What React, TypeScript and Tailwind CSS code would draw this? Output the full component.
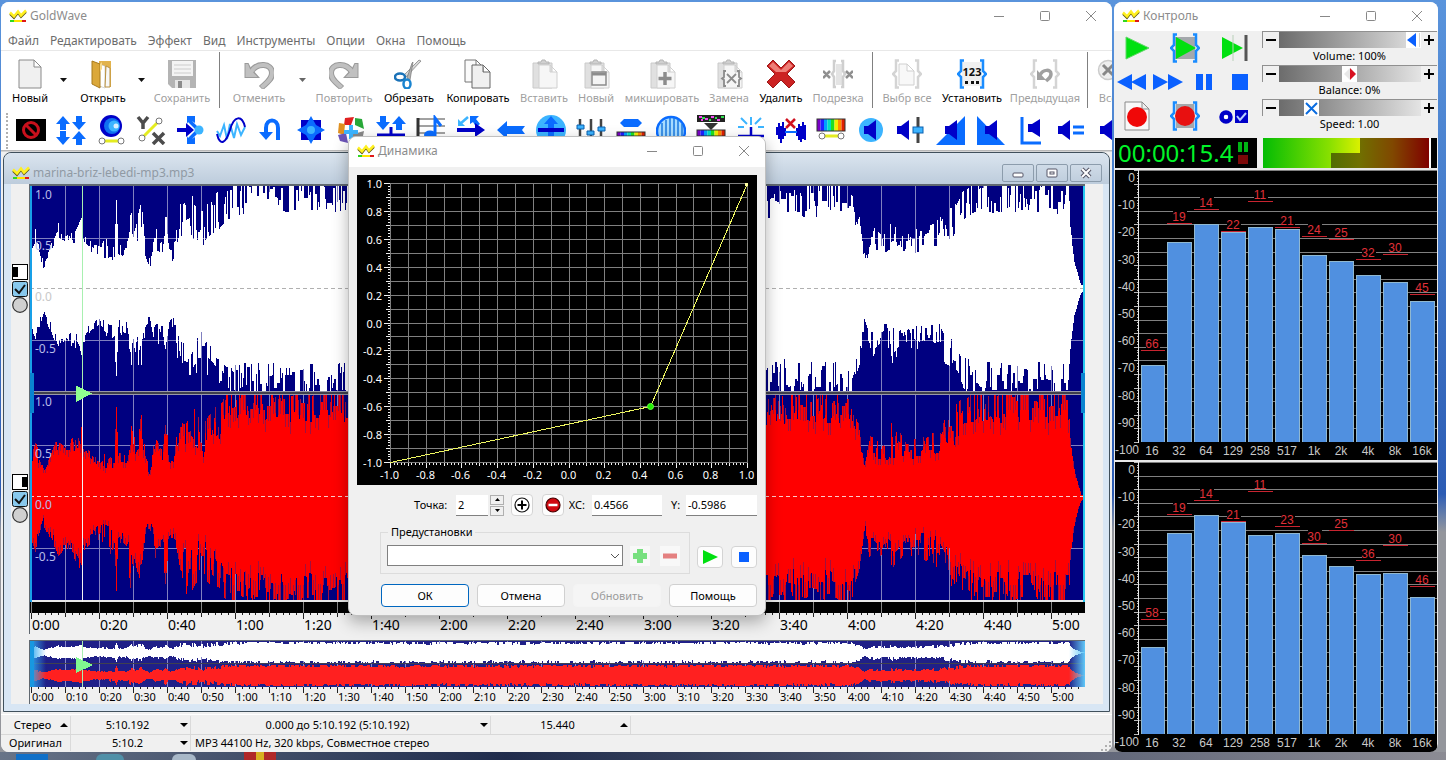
import {type ReactNode} from "react";
import clsx from "clsx";

const RAINBOW = ["#7a00c8", "#2020ff", "#00a0ff", "#00e0c0", "#20e020", "#f0f000", "#ff9000", "#e02000"];

// ---------------------------------------------------------------- waveform data

const WIDTH = 1055;
const PX_PER_SECOND = 3.4;
const timeX = (seconds: number) => Math.round(1 + seconds * PX_PER_SECOND);

const random = (seed: number) => {
    let s = seed;
    return () => {
        s = (s * 1664525 + 1013904223) % 4294967296;
        return s / 4294967296;
    };
};

// x, quiet level, loud level
const ENVELOPE = [
    [0, .32, .4], [5, .38, .58], [9, .3, .42], [13, .18, .28], [19, .28, .4], [28, .46, .64], [34, .45, .52],
    [44, .4, .6], [51, .5, .74], [54, .42, .55], [60, .33, .48], [70, .22, .42], [80, .24, .6], [84, .25, .55],
    [86, .8, .92], [88, .3, .45], [96, .3, .5], [100, .5, .88], [104, .4, .6], [111, .5, .88], [115, .3, .4],
    [119, .18, .3], [125, .35, .6], [132, .32, .5], [135, .5, .85], [139, .3, .4], [143, .25, .4], [150, .45, .9],
    [160, .5, .95], [168, .4, .8], [175, .38, .85], [185, .5, .95], [195, .65, 1.05], [215, .72, 1.1],
    [330, .72, 1.12], [420, .68, 1.1], [700, .72, 1.1], [740, .68, 1.05], [790, .68, 1.08], [820, .72, 1.05],
    [829, .52, .75], [834, .25, .35], [840, .32, .7], [855, .32, .55], [862, .34, .75], [875, .36, .55],
    [890, .32, .62], [908, .32, .7], [915, .45, .85], [925, .5, .9], [932, .65, 1.0], [950, .7, 1.1],
    [1038, .72, 1.12], [1040, .55, .6], [1044, .25, .28], [1048, .1, .12], [1051, .02, .04], [1056, 0, 0],
];

const makePeaks = (seed: number) => {
    const rnd = random(seed);
    const peaks: number[] = [];
    let k = 0;
    let held = rnd();
    for (let x = 0; x < WIDTH; x++) {
        while (ENVELOPE[k + 1][0] <= x && k < ENVELOPE.length - 2) k++;
        const [x0, lo0, hi0] = ENVELOPE[k];
        const [x1, lo1, hi1] = ENVELOPE[k + 1];
        const t = (x - x0) / (x1 - x0);
        if (rnd() > .35) held = rnd();
        const lo = lo0 + (lo1 - lo0) * t;
        const hi = hi0 + (hi1 - hi0) * t;
        peaks.push(Math.min(1, lo + (hi - lo) * held));
    }
    return peaks;
};

const LEFT_UP = makePeaks(7);
const LEFT_DOWN = makePeaks(19);
const RIGHT_UP = makePeaks(31);
const RIGHT_DOWN = makePeaks(53);

// one closed, stepped outline: upper peaks left to right, lower peaks back
const wavePath = (up: number[], down: number[], center: number, half: number, scale = 1) => {
    const top = up.map((u, x) => `V${Math.round(center - u * half * scale)}H${x + 1}`).join("");
    const bottom = down
        .map((d, x) => `V${Math.round(center + d * half * scale) + 1}H${x}`)
        .reverse()
        .join("");
    return `M0 ${center}${top}${bottom}Z`;
};

// every few columns keeps only a thinner body, the rest of its peak is drawn dimmed
const thin = (peaks: number[]) => peaks.map((p, x) => (x * 7) % 5 < 2 ? p * .84 : p);

const range = (count: number) => Array.from({length: count}, (_, i) => i);

const clock = (seconds: number) => `${Math.floor(seconds / 60)}:${String(seconds % 60).padStart(2, "0")}`;

// ---------------------------------------------------------------- shared pieces

const Logo = () => (
    <svg className="h-[14px] w-[18px] shrink-0" viewBox="0 0 18 14">
        <path d="M1 5L5 9L9 4L12 8L17 3" fill="none" stroke="#5c5410" strokeWidth="2"/>
        <path d="M1 3.500L5 7.500L9 2.500L12 6.500L17 1.500" fill="none" stroke="#fff020" strokeWidth="2.500"/>
        <rect x="1" y="11" width="4" height="2" fill="#30d820"/>
        <rect x="5" y="11" width="8" height="2" fill="#ffe400"/>
        <rect x="13" y="11" width="4" height="2" fill="#e01818"/>
    </svg>
);

const TitleBar = ({title}: { title: string }) => (
    <header className="flex h-[30px] shrink-0 items-center bg-white pb-0.5 pl-2">
        <Logo/>
        <h1 className="ml-[3px] flex-1 text-xs text-[#8c8c8c]">{title}</h1>
        <div className="-mr-0.5 flex h-full">
            <button aria-label="Свернуть" className="flex h-full w-[46px] items-center justify-center">
                <svg className="size-3" viewBox="0 0 12 12"><path d="M1 6.500H11" stroke="#888"/></svg>
            </button>
            <button aria-label="Развернуть" className="flex h-full w-[46px] items-center justify-center">
                <svg className="size-3" viewBox="0 0 12 12">
                    <rect x="1.500" y="1.500" width="9" height="9" rx="1" fill="none" stroke="#888"/>
                </svg>
            </button>
            <button aria-label="Закрыть" className="flex h-full w-[46px] items-center justify-center">
                <svg className="size-3" viewBox="0 0 12 12"><path d="M1 1L11 11M11 1L1 11" stroke="#888"/></svg>
            </button>
        </div>
    </header>
);

// ---------------------------------------------------------------- main toolbar

const Sheet = ({x = 5, y = 1, w = 21, h = 28, fill = "#f0f0f0", stroke = "#8a8a8a"}) => (
    <path
        d={`M${x} ${y}H${x + w - 7}L${x + w} ${y + 7}V${y + h}H${x}ZM${x + w - 7} ${y}V${y + 7}H${x + w}`}
        fill={fill}
        stroke={stroke}
    />
);

const Clipboard = () => (
    <>
        <path d="M4 4H23V29H4Z" fill="#e0e0e0" stroke="#cacaca"/>
        <path d="M9 5H20V3H17L16 1H13L12 3H9Z" fill="#d0d0d0" stroke="#b4b4b4"/>
        <Sheet x={10} y={6} w={18} h={23} fill="#f6f6f6" stroke="#d0d0d0"/>
    </>
);

const Braces = ({color, x1 = 0, x2 = 30}: { color: string; x1?: number; x2?: number }) => (
    <path
        d={`M${x1 + 7} 1.500H${x1 + 4}V12L${x1 + 1} 15L${x1 + 4} 18V28.500H${x1 + 7}M${x2 - 7} 1.500H${x2 - 4}V12L${x2 - 1} 15L${x2 - 4} 18V28.500H${x2 - 7}`}
        fill="none"
        stroke={color}
        strokeWidth="2.500"
    />
);

const UndoArrow = () => (
    <>
        <path d="M7 13C13 3 28 4 28 14C28 21 22 24 17 29" fill="none" stroke="#9a9a9a" strokeWidth="6"/>
        <path d="M.5 4H4.500L7 9L16 19H.5Z" fill="#9a9a9a"/>
        <path d="M7 13C13 3 28 4 28 14C28 21 22 24 17.500 28.500" fill="none" stroke="#c0c0c0" strokeWidth="4"/>
        <path d="M1.500 5H4L6 10L13.500 18H1.500Z" fill="#c0c0c0"/>
    </>
);

const TOOLS: Record<string, ReactNode> = {
    new: <Sheet w={22} x={4}/>,
    open: <>
        <path d="M11 2H23V28H11Z" fill="#e2b34c"/>
        <path d="M11 5L17 7V29L11 27Z" fill="#fff" stroke="#aaa" strokeWidth=".5"/>
        <path d="M18 7L22 9V28H17Z" fill="#f8f8f8" stroke="#b89040"/>
        <path d="M4 2L12 5V29L4 25Z" fill="#dba83a" stroke="#a87a1c"/>
        <path d="M12 5L14 3V10L12 13" fill="#f6d98c"/>
    </>,
    save: <>
        <path d="M1 1H29V29H5L1 25Z" fill="#b4b4b4"/>
        <path d="M5 2H26V17H5Z" fill="#f4f4f4"/>
        <path d="M7 6H24M7 10H24M7 14H24" stroke="#ccc"/>
        <path d="M8 21H23V29H8Z" fill="#e6e6e6"/>
        <path d="M11 22H15V29H11Z" fill="#8c8c8c"/>
    </>,
    undo: <UndoArrow/>,
    redo: <g transform="matrix(-1 0 0 1 30 0)"><UndoArrow/></g>,
    cut: <>
        <path d="M27 2L12 18L10 16L25 1Z" fill="#d8d8d8" stroke="#777" strokeWidth=".7"/>
        <path d="M19 3L16 21L13 19L18 4Z" fill="#b0b0b0" stroke="#777" strokeWidth=".7"/>
        <ellipse cx="6" cy="18" rx="5" ry="3.500" fill="none" stroke="#1a72b8" strokeWidth="2.500"/>
        <ellipse cx="13" cy="25" rx="3.500" ry="4.500" fill="none" stroke="#1a84d0" strokeWidth="2.500"/>
    </>,
    copy: <>
        <Sheet x={2} y={1} w={18} h={22} fill="#fafafa" stroke="#777"/>
        <Sheet x={9} y={6} w={18} h={23} fill="#f0f0f0" stroke="#666"/>
    </>,
    paste: <Clipboard/>,
    pasteNew: <>
        <Clipboard/>
        <rect x="11" y="13" width="14" height="13" fill="#f4f4f4" stroke="#8c8c8c" strokeWidth="1.500"/>
        <path d="M11 15H25" stroke="#8c8c8c" strokeWidth="3"/>
    </>,
    mix: <><Clipboard/><path d="M18 13V26M11.500 19.500H24.500" stroke="#8c8c8c" strokeWidth="3.500"/></>,
    replace: <>
        <Clipboard/>
        <path d="M12 12H10V18L8 19.500L10 21V27H12M23 12H25V18L27 19.500L25 21V27H23M13 15L22 24M22 15L13 24"
              fill="none" stroke="#8c8c8c" strokeWidth="1.800"/>
    </>,
    remove: <>
        <path d="M1 7L7 1L15 9L23 1L29 7L21 15L29 23L23 29L15 21L7 29L1 23L9 15Z" fill="#cc2222" stroke="#9c1818"
              strokeLinejoin="round"/>
        <path d="M3 7L7 3L15 11L23 3L27 7L20 13L10 13Z" fill="#ee7f78"/>
    </>,
    trim: <>
        <rect x="13" y="5" width="6" height="21" fill="#e4e4e4"/>
        <path d="M13 2H11V12L9 15L11 18V28H13M18 2H20V12L22 15L20 18V28H18" fill="none" stroke="#cfcfcf"
              strokeWidth="2.500"/>
        <path d="M0 12L7 19M7 12L0 19M23 12L30 19M30 12L23 19" stroke="#909090" strokeWidth="2.500"/>
    </>,
    selectAll: <><Braces color="#d4d4d4"/><Sheet x={7} y={5} w={15} h={21} fill="#f8f8f8" stroke="#d0d0d0"/></>,
    set: <>
        <rect x="5" y="3" width="20" height="24" fill="#f0f0f0"/>
        <Braces color="#1a8cff"/>
        <text x="15" y="17" textAnchor="middle" fontSize="11" fontWeight="700" fill="#111">123</text>
        <path d="M8 22H11V25H8ZM14 22H17V25H14ZM19 22H22V25H19Z" fill="#111"/>
    </>,
    previous: <>
        <Braces color="#d4d4d4"/>
        <path d="M10 16C13 10 21 10 21 15C21 19 18 20 16 22" fill="none" stroke="#a0a0a0" strokeWidth="3.500"/>
        <path d="M7 11V21H16Z" fill="#a0a0a0"/>
    </>,
    all: <>
        <circle cx="15" cy="11" r="9.500" fill="#eee" stroke="#ccc" strokeWidth="1.500"/>
        <path d="M10 6L20 16M20 6L10 16" stroke="#888" strokeWidth="3"/>
    </>,
};

type Tool = { icon: string; label: string; width: string; on?: boolean; menu?: string };

const GROUPS: Tool[][] = [
    [
        {icon: "new", label: "Новый", width: "w-12", on: true, menu: "w-[18px]"},
        {icon: "open", label: "Открыть", width: "w-[62px]", on: true, menu: "w-[14px]"},
        {icon: "save", label: "Сохранить", width: "w-[68px]"},
    ],
    [
        {icon: "undo", label: "Отменить", width: "w-[72px]", menu: "w-[14px]"},
        {icon: "redo", label: "Повторить", width: "w-[70px]"},
        {icon: "cut", label: "Обрезать", width: "w-[60px]", on: true},
        {icon: "copy", label: "Копировать", width: "w-[78px]", on: true},
        {icon: "paste", label: "Вставить", width: "w-[54px]"},
        {icon: "pasteNew", label: "Новый", width: "w-[50px]"},
        {icon: "mix", label: "микшировать", width: "w-[82px]"},
        {icon: "replace", label: "Замена", width: "w-[52px]"},
        {icon: "remove", label: "Удалить", width: "w-[52px]", on: true},
        {icon: "trim", label: "Подрезка", width: "w-[62px]"},
    ],
    [
        {icon: "selectAll", label: "Выбр все", width: "w-[62px]"},
        {icon: "set", label: "Установить", width: "w-[68px]", on: true},
        {icon: "previous", label: "Предыдущая", width: "w-[78px]"},
    ],
    [
        {icon: "all", label: "Все", width: "w-[34px]"},
    ],
];

const MainToolbar = () => (
    <div className="flex h-[59px] shrink-0 overflow-hidden border-t border-[#e8e8e8] pl-[5px]">
        {GROUPS.map((group, g) => (
            <div key={g} className="flex shrink-0">
                {g > 0 && <div className="mx-[3px] my-px w-px bg-[#808080]"/>}
                {group.map((tool) => (
                    <div key={tool.label} className="flex shrink-0">
                        <button
                            className={clsx("flex flex-col items-center justify-center whitespace-nowrap pt-1 text-[11px] leading-4", tool.width, tool.on ? "text-black" : "text-[#a0a0a0]")}
                        >
                            <svg className="mb-px size-[30px] shrink-0" viewBox="0 0 30 30">{TOOLS[tool.icon]}</svg>
                            {tool.label}
                        </button>
                        {tool.menu && (
                            <button aria-label={`${tool.label}: список`}
                                    className={clsx("flex items-center justify-center", tool.menu)}>
                                <svg className="h-1 w-[7px]" viewBox="0 0 7 4">
                                    <path d="M0 0H7L3.500 4Z" fill={tool.on ? "#111" : "#666"}/>
                                </svg>
                            </button>
                        )}
                    </div>
                ))}
            </div>
        ))}
    </div>
);

// ---------------------------------------------------------------- effects toolbar

const BLUE = "#0a6cff";
const NAVY = "#0000c8";
const SKY = "#3cb4ff";

const ArrowUp = ({x, y, flip = false}: { x: number; y: number; flip?: boolean }) => (
    <path transform={`translate(${x} ${y}) scale(1 ${flip ? -1 : 1})`} d="M0-7L7 1H3V7H-3V1H-7Z" fill={BLUE}/>
);

const Speaker = ({x, y = 15, h = 10}: { x: number; y?: number; h?: number }) => (
    <path d={`M${x} ${y - 4}H${x + 4}L${x + 12} ${y - h}V${y + h}L${x + 4} ${y + 4}H${x}Z`} fill={NAVY}/>
);

const Rainbow = ({y, h}: { y: number; h: number }) => (
    <>
        {RAINBOW.map((color, i) => <rect key={color} x={1 + i * 3.5} y={y} width="3.5" height={h} fill={color}/>)}
        <rect x="1" y={y} width="28" height={h} fill="none" stroke="#333"/>
    </>
);

const NodeLine = ({x1, y1, x2, y2}: { x1: number; y1: number; x2: number; y2: number }) => (
    <>
        <path d={`M${x1} ${y1}L${x2} ${y2}`} stroke="#e4ec20" strokeWidth="3"/>
        <circle cx={x1} cy={y1} r="3" fill="#fff" stroke="#777"/>
        <circle cx={x2} cy={y2} r="3" fill="#fff" stroke="#777"/>
    </>
);

const EFFECTS: [string, ReactNode][] = [
    ["Цензура", <>
        <rect y="4" width="30" height="22" fill="#000"/>
        <circle cx="15" cy="15" r="7.500" fill="none" stroke="#c8101c" strokeWidth="3"/>
        <path d="M10 10L20 20" stroke="#c8101c" strokeWidth="3"/>
    </>],
    ["Компрессор", <>
        <ArrowUp x={7} y={8}/><ArrowUp x={23} y={8} flip/>
        <ArrowUp x={7} y={23} flip/><ArrowUp x={23} y={23}/>
    </>],
    ["Доплер", <>
        <circle cx="15" cy="11" r="11" fill={NAVY}/>
        <circle cx="16" cy="11" r="8" fill="#1070f0"/>
        <circle cx="18" cy="11" r="5.500" fill={SKY}/>
        <circle cx="20" cy="11" r="2.500" fill="#d8f0ff"/>
        <NodeLine x1={6} y1={26} x2={25} y2={26}/>
    </>],
    ["Динамика", <>
        <NodeLine x1={6} y1={23} x2={23} y2={6}/>
        <path d="M2 2L7 8L12 2M7 7V14M17 18L28 29M28 18L17 29" fill="none" stroke="#4c4c4c" strokeWidth="3.500"/>
    </>],
    ["Эхо", <>
        <path d="M11 1H19V8L16 6L23 13L20 15L12 7L11 9ZM11 29H19V22L16 24L23 17L20 15L12 23L11 21Z" fill={BLUE}/>
        <path d="M1 13H10V8L18 15L10 22V17H1Z" fill={NAVY}/>
        <circle cx="23" cy="15" r="4.500" fill={SKY}/>
    </>],
    ["Фильтр", <>
        <path d="M1 16L4 21L8 10L11 24L14 9L18 23L21 9L25 20L29 12" fill="none" stroke={SKY} strokeWidth="2"/>
        <path d="M1 19C4 32 10 28 14 15C18 0 26 0 29 12" fill="none" stroke={NAVY} strokeWidth="2"/>
    </>],
    ["Реверс", <>
        <path d="M22 25V13C22 3 10 3 10 13V18" fill="none" stroke={BLUE} strokeWidth="4"/>
        <path d="M3 17H17L10 25Z" fill={BLUE}/>
    </>],
    ["Интерполяция", <>
        <rect x="5" y="5" width="20" height="20" fill={NAVY}/>
        <path d="M15 1L20 10L29 15L20 20L15 29L10 20L1 15L10 10Z" fill={BLUE}/>
        <circle cx="15" cy="15" r="4" fill={SKY}/>
    </>],
    ["Плагины", <>
        <path d="M9 3L18 2L15 10L8 10Z" fill="#e02020"/>
        <path d="M19 3L26 4L28 14L19 10Z" fill="#28a838"/>
        <path d="M3 8L9 9L8 20L2 18Z" fill="#e09020"/>
        <path d="M2 20L10 18L12 28L4 26Z" fill="#6c54b8"/>
        <path d="M14 20L28 16L26 26L16 28Z" fill="#888"/>
        <path d="M15 10V24M8 17H22" stroke={SKY} strokeWidth="4"/>
    </>],
    ["Инверсия", <>
        <ArrowUp x={7} y={8} flip/><ArrowUp x={23} y={8}/>
        <path d="M1 20H29M15 12V28" stroke={NAVY} strokeWidth="3"/>
    </>],
    ["Высота тона", <>
        <path d="M2 4H29M2 11H29M2 18H29M2 25H29" stroke="#444"/>
        <path d="M2 3V26" stroke="#333" strokeWidth="3"/>
        <path d="M19 21V3L25 11" fill="none" stroke={BLUE} strokeWidth="3"/>
        <ellipse cx="14" cy="20" rx="6" ry="4.500" fill={BLUE}/>
    </>],
    ["Смещение", <>
        <path d="M14 1H23L20 4L24 9L20 12L17 7L14 9Z" fill={BLUE}/>
        <path d="M12 2L4 9" stroke={SKY} strokeWidth="2.500"/>
        <path d="M2 4V11H9Z" fill={SKY}/>
        <path d="M1 13H19V8L29 15L19 22V17H1Z" fill={NAVY}/>
    </>],
    ["Назад", <path d="M1 15L11 6V11H29L26 15L29 19H11V24Z" fill={BLUE}/>],
    ["Автоусиление", <>
        <circle cx="15" cy="15" r="15" fill={SKY}/>
        <path d="M15 1L22 9H18V13H12V9H8Z" fill={BLUE}/>
        <rect x="2" y="13" width="26" height="4" fill={NAVY}/>
        <path d="M12 17H18V27H12Z" fill={BLUE}/>
    </>],
    ["Эквалайзер", <>
        <path d="M4 4V26M15 4V26M25 4V26" stroke="#444" strokeWidth="2.500"/>
        <path d="M1 10H8V14H1ZM11 16H18V20H11ZM22 12H29V16H22Z" fill={SKY} stroke="#0a60b0"/>
    </>],
    ["Спектр", <>
        <path d="M4 8L8 4H22L26 8L22 12H8Z" fill={BLUE}/>
        <Rainbow y={17} h={4}/>
    </>],
    ["Сглаживание", <>
        <circle cx="15" cy="16" r="14" fill="#a8dcff" stroke={BLUE} strokeWidth="2.500"/>
        <path d="M6 8V25M10 5V27M14 3V29M18 3V29M22 5V27M26 9V25" stroke="#1a7ae0" strokeWidth="1.500"/>
    </>],
    ["Шумоподавление", <>
        <rect x="1" y="0" width="28" height="7" fill="#222"/>
        <path d="M3 2H6M9 4H12M15 2H18M21 5H24M5 5H7" stroke="#f04cf0" strokeWidth="2"/>
        <path d="M6 3H9M13 5H15M19 3H21M25 2H28" stroke="#30e050" strokeWidth="2"/>
        <path d="M8 8H22L15 15Z" fill="#333"/>
        <Rainbow y={15} h={6}/>
    </>],
    ["Щелчки", <>
        <path d="M5 3L11 9M25 3L19 9M2 12H8M22 12H28M15 2V10" stroke={SKY} strokeWidth="2"/>
        <path d="M15 12V22M2 21H28" stroke={NAVY} strokeWidth="2.500"/>
    </>],
    ["Тишина", <>
        <path d="M1 12V20M3 8V24M5 11V28M7 7V24M9 13V21M21 13V21M23 9V25M25 11V27M27 7V24M29 10V25" stroke={NAVY}
              strokeWidth="2"/>
        <path d="M9 17H21" stroke={BLUE} strokeWidth="2"/>
        <path d="M10 4L19 13M19 4L10 13" stroke="#d01020" strokeWidth="2.500"/>
    </>],
    ["Спектральный фильтр", <><Rainbow y={4} h={12}/><NodeLine x1={6} y1={21} x2={25} y2={21}/></>],
    ["Громкость", <><circle cx="15" cy="15" r="12" fill={SKY}/><Speaker x={8}/></>],
    ["Изменить громкость", <>
        <Speaker x={1}/>
        <path d="M22 2V28" stroke="#444" strokeWidth="3"/>
        <rect x="17" y="12" width="10" height="6" fill={SKY} stroke="#0a60b0"/>
    </>],
    ["Нарастание", <><path d="M0 30L29 1V30Z" fill={BLUE}/><Speaker x={9}/></>],
    ["Затухание", <><path d="M1 1L29 30H1Z" fill={BLUE}/><Speaker x={9}/></>],
    ["Форма громкости", <><path d="M6 2V28H25" fill="none" stroke={BLUE} strokeWidth="3"/><Speaker x={12} y={13} h={9}/></>],
    ["Выровнять громкость", <><Speaker x={2}/><path d="M17 12H28M17 18H28" stroke={BLUE} strokeWidth="3"/></>],
    ["Максимум", <Speaker x={4}/>],
];

const EffectsToolbar = () => (
    <div className="flex h-[42px] shrink-0 overflow-hidden border-b border-[#b8b8b8] pl-[5px] pt-1">
        <div className="mr-[3px] h-9 w-0.5 shrink-0 border-l-2 border-dotted border-[#b0b0b0]"/>
        {EFFECTS.map(([label, art]) => (
            <button key={label} aria-label={label} className="flex h-[33px] w-10 shrink-0 items-center justify-center">
                <svg className="size-[30px]" viewBox="0 0 30 30">{art}</svg>
            </button>
        ))}
    </div>
);

// ---------------------------------------------------------------- sound window

const AXIS = [
    {y: 9, text: "1.0"}, {y: 60, text: "0.5"}, {y: 111, text: "0.0"}, {y: 163, text: "-0.5"},
    {y: 216, text: "1.0"}, {y: 268, text: "0.5"}, {y: 319, text: "0.0"}, {y: 371, text: "-0.5"},
];

const gridPath = (height: number) => range(32).map((i) => `M${timeX(i * 10) + .5} 0V${height}`).join("");

const Wave = () => (
    <div className="relative min-h-[300px] flex-1 bg-[#000080]">
        <svg className="absolute inset-0 h-full w-full" viewBox="0 0 1055 416" preserveAspectRatio="none"
             shapeRendering="crispEdges">
            <rect width="1055" height="416" fill="#000080"/>
            <path d={`${gridPath(416)}M0 52.500H1055M0 154.500H1055M0 259.500H1055M0 362.500H1055`} stroke="#8080c0"/>
            <path d={wavePath(LEFT_UP, LEFT_DOWN, 102, 102)} fill="#fff"/>
            <path d={wavePath(RIGHT_UP, RIGHT_DOWN, 311, 103)} fill="#a01040"/>
            <path d={wavePath(thin(RIGHT_UP), thin(RIGHT_DOWN), 311, 103)} fill="#f00"/>
            <path d="M0 102.500H1055" stroke="#b0b0b0" strokeDasharray="4 3"/>
            <path d="M0 310.500H1055" stroke="#ffc8c8" strokeDasharray="4 3"/>
            <rect y="205" width="1055" height="3" fill="#40404c"/>
            <path d="M0 205.500H1055M0 208.500H1055" stroke="#9898a8"/>
            <path d="M0 415H1055" stroke="#e8e8e8" strokeWidth="2"/>
            <path d="M52.500 0V206" stroke="#a8f0b0"/>
            <path d="M52.500 206V416" stroke="#f4f4f4"/>
            <path d="M1 0V416" stroke="#18a0e8" strokeWidth="2"/>
            <path d="M1054 0V416" stroke="#28c8f0" strokeWidth="2"/>
            <path d="M0 187H4V227H0ZM1051 187H1055V227H1051Z" fill="#0a84d0"/>
            <path d="M46 199.500L62 207.500L46 216Z" fill="#90ff90"/>
        </svg>
        {AXIS.map(({y, text}, i) => (
            <span
                key={i}
                className={clsx("absolute left-[5px] -translate-y-1/2 text-xs leading-4", i === 2 ? "text-[#c8c8c8]" : "text-[#b8bce8]")}
                style={{top: `${(y / 416) * 100}%`}}
            >
                {text}
            </span>
        ))}
    </div>
);

const Ruler = ({step, className}: { step: number; className: string }) => (
    <div className={clsx("relative overflow-hidden whitespace-nowrap bg-[#f0f0f0] text-black", className)}>
        <svg className="absolute inset-x-0 top-0 h-[6px] w-full" viewBox="0 0 1055 6" preserveAspectRatio="none"
             shapeRendering="crispEdges">
            <path
                d={range(156).map((i) => `M${timeX(i * 2) + .5} 0V${(i * 2) % step === 0 ? 6 : (i * 2) % 10 === 0 ? 4 : 2}`).join("")}
                stroke="#222"
            />
        </svg>
        {range(Math.floor(300 / step) + 1).map((i) => (
            <span key={i} className="absolute bottom-0" style={{left: `${((timeX(i * step) + 1) / WIDTH) * 100}%`}}>
                {clock(i * step)}
            </span>
        ))}
    </div>
);

const Overview = () => (
    <svg className="h-[46px] w-full" viewBox="0 0 1055 46" preserveAspectRatio="none" shapeRendering="crispEdges">
        <defs>
            <linearGradient id="fade"><stop stopColor="#30a8f0"/><stop offset="1" stopColor="#30a8f0" stopOpacity="0"/></linearGradient>
            <linearGradient id="fadeEnd"><stop stopColor="#60c8f8" stopOpacity="0"/><stop offset="1" stopColor="#60c8f8"/></linearGradient>
        </defs>
        <rect width="1055" height="46" fill="#202088"/>
        <path d={gridPath(46)} stroke="#8888c8"/>
        <path d={wavePath(LEFT_UP, LEFT_DOWN, 11, 11, .95)} fill="#fff"/>
        <path d={wavePath(RIGHT_UP, RIGHT_DOWN, 34, 11, .95)} fill="#ff2020"/>
        <path d="M0 22.500H1055" stroke="#404050"/>
        <rect width="16" height="46" fill="url(#fade)"/>
        <rect width="4" height="46" fill="#1898e0"/>
        <rect x="1039" width="16" height="46" fill="url(#fadeEnd)"/>
        <path d="M52.500 0V46" stroke="#a8f0b0"/>
        <path d="M46 16L63 24L46 32Z" fill="#80f890"/>
    </svg>
);

const ChannelControls = ({name, side}: { name: string; side: "left" | "right" }) => (
    <div className="flex flex-col items-center">
        <svg className="size-4" viewBox="0 0 16 16">
            <rect x=".5" y=".5" width="15" height="15" fill="#fff" stroke="#000"/>
            <rect x={side === "left" ? 1 : 10} y="3" width="5" height="10" fill="#000"/>
        </svg>
        <label className="mt-px h-4">
            <input type="checkbox" defaultChecked className="sr-only" aria-label={`${name} канал`}/>
            <svg className="size-4" viewBox="0 0 16 16">
                <rect x=".5" y=".5" width="15" height="15" rx="2" fill="#88c8ec" stroke="#111"/>
                <path d="M3 8L7 12L13 4" fill="none" stroke="#111" strokeWidth="2"/>
            </svg>
        </label>
        <label className="h-4">
            <input type="radio" name="solo" className="sr-only" aria-label={`${name} канал: соло`}/>
            <svg className="size-4" viewBox="0 0 16 16">
                <circle cx="8" cy="8" r="7.300" fill="#d0d0d0" stroke="#333" strokeWidth="1.200"/>
            </svg>
        </label>
    </div>
);

const childButton = "flex h-[18px] w-8 items-center justify-center rounded-xs border border-[#8c9cac]";

const SoundWindow = () => (
    <section className="mx-0.5 flex flex-1 flex-col rounded-t-lg border border-[#40505c] bg-[#d8e6f4] pb-[7px] pl-[7px] pr-[6px]">
        <header
            className="-ml-[7px] -mr-[6px] flex h-[31px] shrink-0 items-center rounded-t-lg bg-linear-to-b from-[#dbe5ef] to-[#bdccdc] pl-2 pr-[7px] pt-2">
            <Logo/>
            <h2 className="ml-[3px] flex-1 text-xs text-[#909aa4]">marina-briz-lebedi-mp3.mp3</h2>
            <div className="flex gap-0.5">
                <button aria-label="Свернуть файл" className={childButton}>
                    <svg className="h-3 w-4" viewBox="0 0 16 12">
                        <rect x="3" y="6" width="10" height="4" rx="1" fill="#fff" stroke="#556"/>
                    </svg>
                </button>
                <button aria-label="Развернуть файл" className={childButton}>
                    <svg className="h-3 w-4" viewBox="0 0 16 12">
                        <rect x="3" y="2" width="10" height="8" rx="1" fill="#fff" stroke="#556"/>
                        <rect x="6" y="5" width="4" height="2" fill="#fff" stroke="#556"/>
                    </svg>
                </button>
                <button aria-label="Закрыть файл" className={childButton}>
                    <svg className="h-3 w-4" viewBox="0 0 16 12">
                        <path d="M4 2L12 10M12 2L4 10" stroke="#556" strokeWidth="4"/>
                        <path d="M4 2L12 10M12 2L4 10" stroke="#fff" strokeWidth="2"/>
                    </svg>
                </button>
            </div>
        </header>
        <div className="flex flex-1 bg-[#f0f0f0]">
            <div className="flex w-[18px] shrink-0 flex-col gap-[161px] pt-20">
                <ChannelControls name="Левый" side="left"/>
                <ChannelControls name="Правый" side="right"/>
            </div>
            <div className="flex min-w-0 flex-1 flex-col">
                <div className="flex flex-1 flex-col border-l border-t-2 border-[#606870]">
                    <Wave/>
                    <svg className="h-[11px] w-full shrink-0 bg-black" viewBox="0 0 1055 11" preserveAspectRatio="none"
                         shapeRendering="crispEdges">
                        <path d={gridPath(11)} stroke="#888"/>
                    </svg>
                    <Ruler step={20} className="h-[21px] text-sm leading-[18px]"/>
                </div>
                <div className="mt-[6px] flex flex-col border-l border-t border-[#606870]">
                    <Overview/>
                    <Ruler step={10} className="h-[17px] text-[11px] leading-[14px]"/>
                </div>
            </div>
            <div className="w-[18px] shrink-0"/>
        </div>
    </section>
);

// ---------------------------------------------------------------- status bar

const StatusCell = ({width, text, arrow}: { width: string; text: string; arrow?: "up" | "down" }) => (
    <div className={clsx("flex shrink-0 items-center border-r border-[#dadada]", width, arrow && "pl-1")}>
        <span className="flex-1 text-center">{text}</span>
        {arrow && (
            <button aria-label={`${text}: список`} className="mr-0.5 flex h-4 w-2 items-center">
                <svg className="h-1 w-2" viewBox="0 0 8 4">
                    <path d={arrow === "up" ? "M0 4H8L4 0Z" : "M0 0H8L4 4Z"} fill="#000"/>
                </svg>
            </button>
        )}
    </div>
);

const StatusBar = () => (
    <footer className="mt-0.5 flex h-[38px] shrink-0 flex-col bg-[#f0f0f0] text-[11px] leading-4 text-black">
        <div className="flex flex-1 border-t border-white pt-px">
            <StatusCell width="w-[70px]" text="Стерео" arrow="up"/>
            <StatusCell width="w-[120px]" text="5:10.192" arrow="down"/>
            <StatusCell width="w-[300px]" text="0.000 до 5:10.192 (5:10.192)" arrow="down"/>
            <StatusCell width="w-[140px]" text="15.440" arrow="up"/>
        </div>
        <div className="flex flex-1 items-center border-t border-[#d8d8d8]">
            <StatusCell width="w-[70px]" text="Оригинал"/>
            <StatusCell width="w-[120px]" text="5:10.2" arrow="down"/>
            <span className="flex-1 pl-1">MP3 44100 Hz, 320 kbps, Совместное стерео</span>
            <svg className="size-3 self-end" viewBox="0 0 12 12">
                <path d="M9 1H11V3H9ZM9 5H11V7H9ZM9 9H11V11H9ZM5 5H7V7H5ZM5 9H7V11H5ZM1 9H3V11H1Z" fill="#b0b0b0"/>
            </svg>
        </div>
    </footer>
);

const MENU = ["Файл", "Редактировать", "Эффект", "Вид", "Инструменты", "Опции", "Окна", "Помощь"];

const MainWindow = () => (
    <main className="flex min-w-0 flex-1 flex-col overflow-hidden rounded-lg bg-[#f0f0f0]">
        <TitleBar title="GoldWave"/>
        <nav className="flex h-[18px] shrink-0 items-center gap-[11px] bg-white pl-[7px] text-xs text-[#6c6c6c]">
            {MENU.map((item) => <button key={item}>{item}</button>)}
        </nav>
        <div className="bg-white">
            <MainToolbar/>
            <EffectsToolbar/>
        </div>
        <div className="h-px shrink-0 bg-[#d4d4d4]"/>
        <SoundWindow/>
        <StatusBar/>
    </main>
);

// ---------------------------------------------------------------- control window

const Slider = ({label, value, position, thumb}: { label: string; value: string; position: string; thumb: ReactNode }) => (
    <div className="flex h-[34px] flex-col">
        <div className="flex h-[17px] border-l border-t border-[#909090]">
            <button aria-label={`${label} -`} className="flex w-4 items-center justify-center bg-[#f0f0f0]">
                <svg className="size-3" viewBox="0 0 12 12"><path d="M1 6H11" stroke="#000" strokeWidth="2"/></svg>
            </button>
            <div className="relative flex-1 bg-linear-to-r from-[#6c6c6c] to-[#e4e4e4]">
                <input type="range" aria-label={label} defaultValue={50} className="absolute inset-0 h-full w-full opacity-0"/>
                <svg className={clsx("pointer-events-none absolute top-0 h-4 w-[15px] bg-white", position)}
                     viewBox="0 0 15 16">{thumb}</svg>
            </div>
            <button aria-label={`${label} +`} className="flex w-4 items-center justify-center bg-[#f0f0f0]">
                <svg className="size-3" viewBox="0 0 12 12"><path d="M1 6H11M6 1V11" stroke="#000" strokeWidth="2"/></svg>
            </button>
        </div>
        <div className="text-center text-[11px] leading-4 text-black">{label}: {value}</div>
    </div>
);

const PLAY = "M4 4L27 15L4 26Z";

const CONTROLS: { label: string; width: string; art: ReactNode }[][] = [
    [
        {label: "Воспроизвести", width: "w-[46px]", art: <path d={PLAY} fill="#00e010" stroke="#60d868"/>},
        {label: "Воспроизвести выделение", width: "w-[49px]", art: <>
            <rect x="5" y="4" width="20" height="22" fill="#a4a8ac"/>
            <path d="M6 4L26 15L6 26Z" fill="#00e010"/><Braces color="#1a8cff"/>
        </>},
        {label: "Воспроизвести до конца", width: "w-[49px]", art: <>
            <path d="M3 4L24 15L3 26Z" fill="#00e010"/>
            <path d="M14 2V28" stroke="#b8d0b8"/><path d="M27 2V28" stroke="#555" strokeWidth="3"/>
        </>},
    ],
    [
        {label: "Назад", width: "w-9", art: <path d="M0 15L15 7V23ZM14 15L29 7V23Z" fill="#0a60ff"/>},
        {label: "Вперёд", width: "w-[35px]", art: <path d="M30 15L15 7V23ZM15 15L0 7V23Z" fill="#0a60ff"/>},
        {label: "Пауза", width: "w-[38px]", art: <path d="M7 7H14V23H7ZM17 7H23V23H17Z" fill="#0a60ff"/>},
        {label: "Стоп", width: "w-[34px]", art: <rect x="7" y="7" width="16" height="16" fill="#0a60ff"/>},
    ],
    [
        {label: "Запись", width: "w-[46px]", art: <>
            <Sheet x={3} y={1} w={24} h={28} fill="#f8f8f8"/><circle cx="15" cy="16" r="10" fill="#f00808"/>
        </>},
        {label: "Запись выделения", width: "w-[49px]", art: <>
            <rect x="6" y="3" width="18" height="24" fill="#a4a8ac"/>
            <Braces color="#1a8cff"/><circle cx="15" cy="15" r="10" fill="#e81010"/>
        </>},
        {label: "Параметры", width: "w-[49px]", art: <>
            <circle cx="7" cy="16" r="4.500" fill="none" stroke={NAVY} strokeWidth="4.500"/>
            <circle cx="7" cy="16" r="2" fill="#fff"/>
            <rect x="16" y="9" width="13" height="13" fill={NAVY}/>
            <path d="M18 15L21 19L27 12" fill="none" stroke="#b8ccff" strokeWidth="2"/>
        </>},
    ],
];

const FREQUENCIES = ["16", "32", "64", "129", "258", "517", "1k", "2k", "4k", "8k", "16k"];

// bar height, peak line height and peak label, heights in px above the floor
const TOP_BANDS = [
    [77, 92, 66], [200, 219, 19], [218, 233, 14], [210, 211, 22], [215, 241, 11], [213, 215, 21],
    [187, 206, 24], [181, 203, 25], [167, 183, 32], [160, 188, 30], [141, 148, 45],
];
const BOTTOM_BANDS = [
    [87, 115, 58], [201, 220, 19], [219, 234, 14], [212, 213, 21], [199, 243, 11], [201, 208, 23],
    [179, 191, 30], [168, 204, 25], [160, 174, 36], [161, 189, 30], [137, 148, 46],
];

const Spectrum = ({bands}: { bands: number[][] }) => (
    <svg className="w-full border-t-2 border-[#e8e8e8] bg-black font-['Liberation_Sans',sans-serif]"
         viewBox="0 0 324 290" shapeRendering="crispEdges">
        <path d={range(20).map((i) => `M25 ${Math.round(i * 13.6) + .5}H323`).join("")} stroke="#808080"/>
        <path d={range(101).map((i) => `M${i % 5 === 0 ? 20 : 23} ${Math.round(i * 2.72) + .5}H25`).join("")}
              stroke="#b8b8b8"/>
        <path d="M24.500 0V273M.5 0V290M323.500 0V290" stroke="#e8e8e8"/>
        {range(11).map((i) => (
            <text key={i} x={i === 10 ? 25 : 21} y={Math.round(i * 27.2) + 12} textAnchor="end" fontSize="12"
                  fill="#c8c8c8">
                {i === 0 ? "0" : -i * 10}
            </text>
        ))}
        {bands.map(([height, peak, label], i) => (
            <g key={i}>
                <rect x={i ? 26 + i * 27 : 27} y={272 - height} width={i ? 25 : 24} height={height} fill="#5090e0"/>
                <path d={`M${i ? 26.5 + i * 27 : 27.5} 272V${272.5 - height}H${50.5 + i * 27}V272`} fill="none"
                      stroke="#90b8d0"/>
                <rect x={32 + i * 27} y={272 - peak - 13} width="14" height="11" fill="#000"/>
                <path d={`M${i ? 26 + i * 27 : 27} ${272.5 - peak}H${51 + i * 27}`} stroke="#c82430"/>
                <text x={38 + i * 27} y={272 - peak - 2} textAnchor="middle" fontSize="12" fill="#e03038">{label}</text>
                <text x={38 + i * 27} y="285" textAnchor="middle" fontSize="12" fill="#c8c8c8">{FREQUENCIES[i]}</text>
            </g>
        ))}
    </svg>
);

const ControlWindow = () => (
    <aside className="flex w-[324px] shrink-0 flex-col overflow-hidden rounded-lg bg-[#f0f0f0]">
        <TitleBar title="Контроль"/>
        <div className="-mt-px flex h-[107px] gap-1 bg-[#f0f0f0] pr-px">
            <div className="flex flex-1 flex-col">
                {CONTROLS.map((row, i) => (
                    <div key={i} className="flex h-[34px]">
                        {row.map(({label, width, art}) => (
                            <button key={label} aria-label={label}
                                    className={clsx("flex shrink-0 items-center justify-center", width)}>
                                <svg className="size-[30px]" viewBox="0 0 30 30">{art}</svg>
                            </button>
                        ))}
                    </div>
                ))}
            </div>
            <div className="w-[175px] shrink-0">
                <Slider label="Volume" value="100%" position="right-0" thumb={
                    <><path d="M1 8L5 5L10 1V15L5 11Z" fill="#0a60ff"/><path d="M13.500 1V15" stroke="#d0d0d0"/></>
                }/>
                <Slider label="Balance" value="0%" position="left-[63px]" thumb={
                    <><path d="M8 2V14L2 8Z" fill="#e8e8e8"/><path d="M8 2V14L14 8Z" fill="#d81020"/></>
                }/>
                <Slider label="Speed" value="1.00" position="left-[25px]" thumb={
                    <path d="M2 3L13 14M13 3L2 14" stroke="#0a6ce0" strokeWidth="2"/>
                }/>
            </div>
        </div>
        <div className="flex h-[30px] shrink-0 justify-between pl-px pr-px">
            <div className="flex w-[142px] items-center gap-1 bg-black pl-[3px]">
                <time className="text-2xl leading-[30px] text-[#00f428]">00:00:15.4</time>
                <svg className="h-6 w-3" viewBox="0 0 12 24">
                    <path d="M1 1H5V11H1ZM7 1H11V11H7Z" fill="#00b414"/>
                    <rect x="1" y="14" width="10" height="9" fill="#7c0808"/>
                </svg>
            </div>
            <svg className="h-[30px] w-[174px]" viewBox="0 0 174 30" preserveAspectRatio="none">
                <defs>
                    <linearGradient id="meter">
                        <stop stopColor="#04bc04"/><stop offset=".4" stopColor="#88e000"/>
                        <stop offset=".58" stopColor="#d8f000"/><stop offset="1" stopColor="#ff1000"/>
                    </linearGradient>
                    <linearGradient id="dim">
                        <stop stopColor="#046404"/><stop offset=".58" stopColor="#707000"/>
                        <stop offset=".78" stopColor="#804800"/><stop offset="1" stopColor="#800000"/>
                    </linearGradient>
                </defs>
                <rect width="174" height="30" fill="#000"/>
                <rect width="166" height="30" fill="url(#dim)"/>
                <clipPath id="level"><path d="M0 0H97V15H68V30H0Z"/></clipPath>
                <rect width="166" height="30" fill="url(#meter)" clipPath="url(#level)"/>
                <path d="M167 0V30" stroke="#fff" strokeWidth="2"/>
            </svg>
        </div>
        <Spectrum bands={TOP_BANDS}/>
        <Spectrum bands={BOTTOM_BANDS}/>
    </aside>
);

// ---------------------------------------------------------------- dynamics dialog

const gx = (v: number) => Math.round(33 + ((v + 1) / 2) * 357) + .5;
const gy = (v: number) => Math.round(8 + ((1 - v) / 2) * 279) + .5;

const DynamicsPlot = () => (
    <svg className="w-full bg-black text-[11px]" viewBox="0 0 400 310">
        <g shapeRendering="crispEdges">
            <path
                d={range(21).map((i) => `M${gx(i / 10 - 1)} 8V288M33 ${gy(i / 10 - 1)}H391`).join("")}
                stroke="#808080"
            />
            <path
                d={range(101).map((i) => `M${gx(i / 50 - 1)} 288V${i % 10 === 0 ? 293 : i % 5 === 0 ? 291 : 290}M33 ${gy(i / 50 - 1)}H${i % 10 === 0 ? 27 : i % 5 === 0 ? 29 : 31}`).join("")}
                stroke="#f0f0f0"
            />
            <path d={`M${gx(-1)} ${gy(-1)}L${gx(.4566)} ${gy(-.5986)}L${gx(1)} ${gy(1)}`} fill="none" stroke="#f0f860"/>
            <rect x="388" y="8" width="3" height="3" fill="#ffffa0"/>
        </g>
        <circle cx={gx(.4566)} cy={gy(-.5986)} r="3" fill="#20f000" stroke="#60ff40"/>
        {range(11).map((i) => {
            const value = (i / 5 - 1).toFixed(1);
            return (
                <g key={i} fill="#fff">
                    <text x="25" y={gy(i / 5 - 1) + 4} textAnchor="end">{value}</text>
                    <text x={gx(i / 5 - 1) - 1} y="304" textAnchor="middle">{value}</text>
                </g>
            );
        })}
    </svg>
);

const field = "h-[21px] border-b border-[#808080] bg-white px-0.5 text-[11px] text-black outline-none";
const iconButton = "flex h-[22px] items-center justify-center rounded-sm border border-[#d4d4d4] bg-[#fdfdfd]";
const action = "h-[23px] flex-1 rounded-sm border text-[11px]";

const DynamicsDialog = () => (
    <div
        role="dialog"
        aria-label="Динамика"
        className="absolute left-[348px] top-[136px] w-[418px] overflow-hidden rounded-lg border border-[#c0c0c0] bg-[#f0f0f0] text-[11px] leading-4 text-black shadow-[0_6px_16px_rgba(0,0,0,0.3)]"
    >
        <TitleBar title="Динамика"/>
        <div className="px-2 pb-2 pt-2">
            <DynamicsPlot/>
            <div className="mt-[9px] flex items-center">
                <label htmlFor="point" className="ml-[57px] w-[42px]">Точка:</label>
                <input id="point" defaultValue="2" className={clsx(field, "w-8")}/>
                <div className="ml-0.5 flex w-[14px] flex-col gap-px">
                    <button aria-label="Следующая точка" className="flex h-[10px] items-center justify-center border border-[#b0b0b0]">
                        <svg className="h-[3px] w-[5px]" viewBox="0 0 5 3"><path d="M0 3H5L2.500 0Z"/></svg>
                    </button>
                    <button aria-label="Предыдущая точка" className="flex h-[10px] items-center justify-center border border-[#b0b0b0]">
                        <svg className="h-[3px] w-[5px]" viewBox="0 0 5 3"><path d="M0 0H5L2.500 3Z"/></svg>
                    </button>
                </div>
                <button aria-label="Добавить точку" className={clsx(iconButton, "ml-[7px] w-[22px]")}>
                    <svg className="size-4 shrink-0" viewBox="0 0 16 16">
                        <circle cx="8" cy="8" r="7" fill="#fff" stroke="#111" strokeWidth="1.200"/>
                        <path d="M8 3.500V12.500M3.500 8H12.500" stroke="#000" strokeWidth="2"/>
                    </svg>
                </button>
                <button aria-label="Удалить точку" className={clsx(iconButton, "ml-[9px] w-[22px]")}>
                    <svg className="size-4 shrink-0" viewBox="0 0 16 16">
                        <circle cx="8" cy="8" r="7" fill="#d00810" stroke="#400" strokeWidth="1.200"/>
                        <path d="M3.500 8H12.500" stroke="#fff" strokeWidth="2.500"/>
                    </svg>
                </button>
                <label htmlFor="px" className="ml-[5px] flex w-4 justify-end overflow-hidden">ХС:</label>
                <input id="px" defaultValue="0.4566" className={clsx(field, "ml-[7px] w-[70px]")}/>
                <label htmlFor="py" className="ml-[9px] w-[15px]">Y:</label>
                <input id="py" defaultValue="-0.5986" className={clsx(field, "w-[71px]")}/>
            </div>
            <div className="ml-[23px] mt-2 flex items-end">
                <fieldset className="flex h-[50px] w-[310px] items-end border border-[#dcdcdc] px-[6px] pb-[7px]">
                    <legend className="ml-px px-[3px]">Предустановки</legend>
                    <div className="relative">
                        <select aria-label="Предустановки" className="h-[21px] w-[236px] appearance-none border border-[#808080] bg-white">
                            <option/>
                        </select>
                        <svg className="pointer-events-none absolute right-1 top-2 h-[6px] w-2" viewBox="0 0 8 6">
                            <path d="M0 1L4 5L8 1" fill="none" stroke="#555"/>
                        </svg>
                    </div>
                    <button aria-label="Сохранить предустановку" className="ml-[7px] flex size-5 items-center justify-center bg-[#f8f8f8]">
                        <svg className="size-[14px]" viewBox="0 0 14 14"><path d="M7 0V14M0 7H14" stroke="#78e080" strokeWidth="6"/></svg>
                    </button>
                    <button aria-label="Удалить предустановку" className="ml-[10px] flex size-5 items-center justify-center bg-[#f8f8f8]">
                        <svg className="size-[14px]" viewBox="0 0 14 14"><path d="M0 7H14" stroke="#e48080" strokeWidth="5"/></svg>
                    </button>
                </fieldset>
                <button aria-label="Прослушать" className={clsx(iconButton, "mb-[6px] ml-[7px] w-[26px]")}>
                    <svg className="size-4 shrink-0" viewBox="0 0 16 16"><path d="M1 1L16 8L1 15Z" fill="#00e010"/></svg>
                </button>
                <button aria-label="Остановить" className={clsx(iconButton, "mb-[6px] ml-2 w-[26px]")}>
                    <svg className="size-[10px] shrink-0" viewBox="0 0 10 10"><rect width="10" height="10" fill="#0a60ff"/></svg>
                </button>
            </div>
            <div className="ml-6 mt-[10px] flex gap-2">
                <button className={clsx(action, "border-[#0067c0] bg-[#fdfdfd]")}>ОК</button>
                <button className={clsx(action, "border-[#d0d0d0] bg-[#fdfdfd]")}>Отмена</button>
                <button disabled className={clsx(action, "border-[#f4f4f4] bg-[#f5f5f5] text-[#9c9c9c]")}>Обновить</button>
                <button className={clsx(action, "border-[#d0d0d0] bg-[#fdfdfd]")}>Помощь</button>
            </div>
        </div>
    </div>
);

const Desktop = () => (
    <div className="absolute inset-0 -z-10 flex flex-col overflow-hidden bg-linear-to-b from-[#5a94dc] from-0% via-[#2c5cb4] via-65% to-[#94969c] to-70%">
        <div className="mt-auto flex h-2 items-end bg-linear-to-r from-[#687488] via-[#202c4c] via-35% to-[#8c8c94]">
            <div className="ml-4 h-1.5 w-8 bg-[#1070c8]"/>
            <div className="ml-12 h-1.5 w-7 rounded-t-full bg-[#5090a8]"/>
            <div className="ml-12 h-1.5 w-6 rounded-t-full bg-[#a8b8c8]"/>
            <div className="ml-12 flex h-2 w-8 justify-center bg-[#b02828]">
                <div className="h-2 w-2 bg-[#d8b020]"/>
            </div>
        </div>
    </div>
);

export default function App() {
    return (
        <div className="relative isolate flex min-h-screen gap-0.5 pb-2 pl-px pr-2 pt-0.5 font-['Noto_Sans',sans-serif]">
            <Desktop/>
            <MainWindow/>
            <ControlWindow/>
            <DynamicsDialog/>
        </div>
    );
}
